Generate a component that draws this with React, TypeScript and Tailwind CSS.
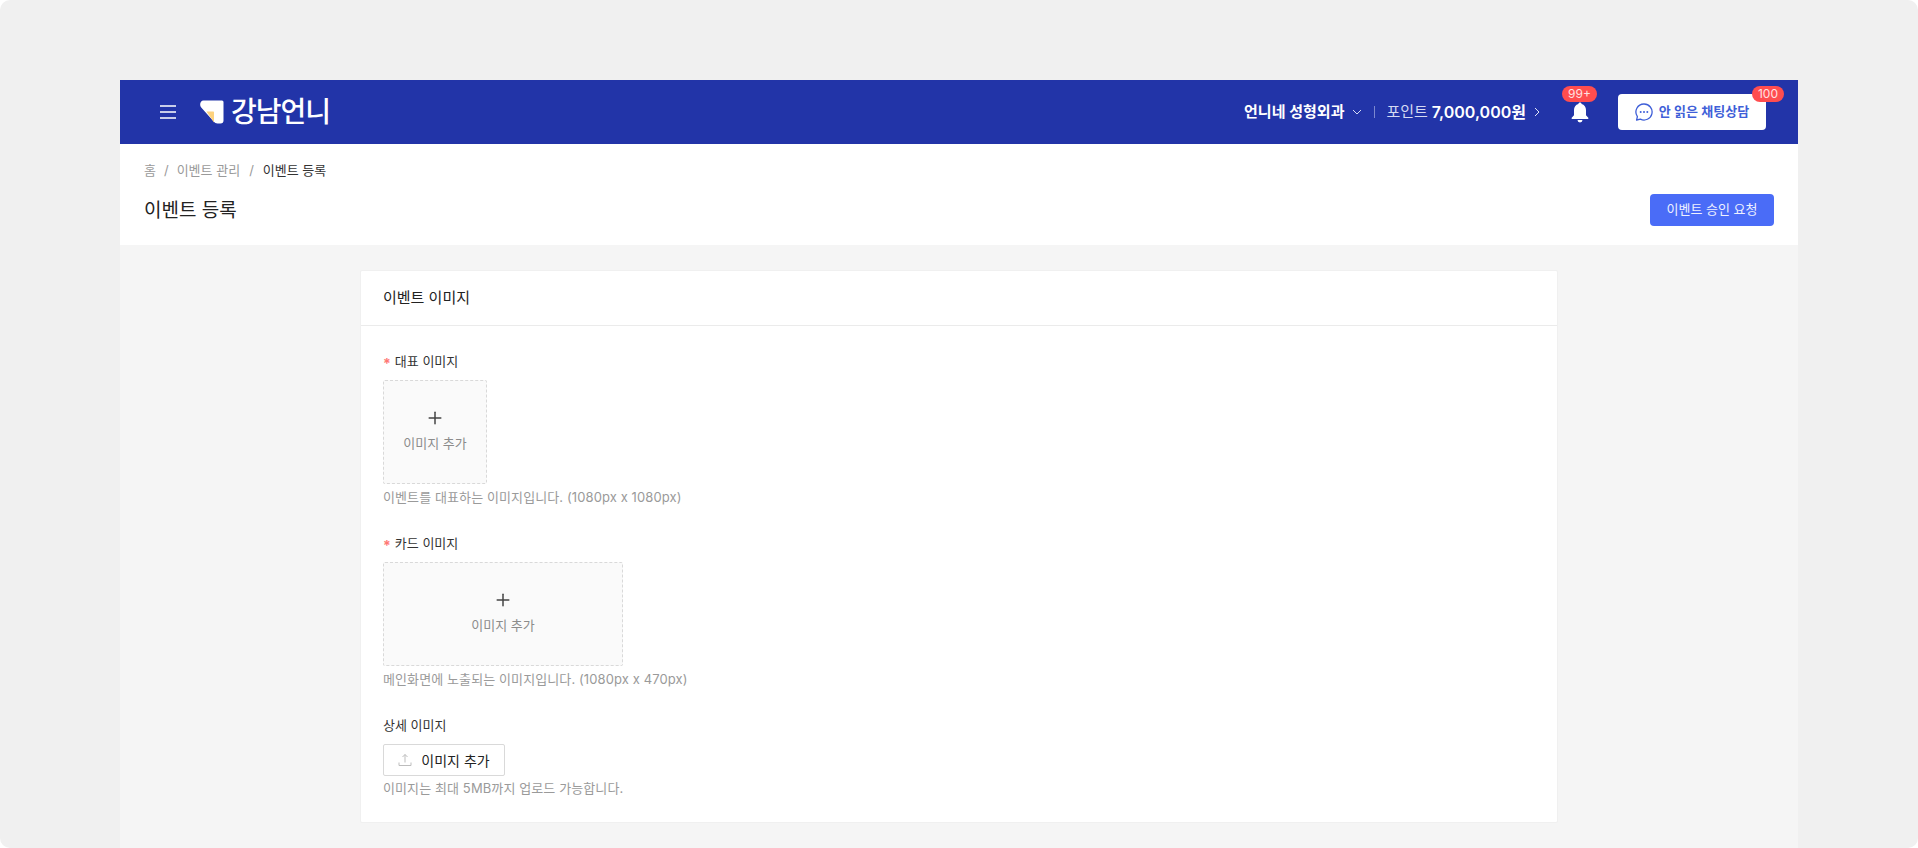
import React from 'react';
import { Plus } from 'lucide-react';

const FONT = "font-['Inter','Noto_Sans_CJK_KR',sans-serif]";

const MenuIcon = () => (
  <svg width="16" height="14" viewBox="0 0 16 14" fill="none" stroke="white" strokeWidth="1.4">
    <path d="M0 1h16M0 7h16M0 13h16" />
  </svg>
);

const LogoMark = () => (
  <svg width="24" height="24" viewBox="0 0 24 24">
    <path d="M3.5 0.5H22a1.5 1.5 0 0 1 1.5 1.5V20.5a3 3 0 0 1-3 3h-3c-1.6 0-2.8-.7-3.8-1.9L1 7.2C-.8 4.6 .4 .5 3.5 .5z" fill="white" />
    <path d="M6.5 11.5H13c.6 0 1 .4 1 1v10L6.5 11.5z" fill="#fdd27e" />
  </svg>
);

const BellIcon = () => (
  <svg width="18" height="21" viewBox="0 0 18 21" fill="white">
    <path d="M9 0.5c.9 0 1.5.6 1.6 1.4C13.4 2.6 15 5 15 8v5.2l2.3 2.6c.4.5.1 1.2-.5 1.2H1.2c-.6 0-.9-.7-.5-1.2L3 13.2V8c0-3 1.6-5.4 4.4-6.1C7.5 1.1 8.1.5 9 .5z" />
    <path d="M6.5 18h5a2.5 2.5 0 0 1-5 0z" />
  </svg>
);

const ChatIcon = () => (
  <svg width="18" height="18" viewBox="0 0 18 18" fill="none">
    <path d="M9 1a8 8 0 1 1-3.6 15.1L1.6 17l.8-3.4A8 8 0 0 1 9 1z" stroke="#3f5fd8" strokeWidth="1.3" strokeLinejoin="round" />
    <circle cx="5.7" cy="9" r="1" fill="#3f5fd8" />
    <circle cx="9" cy="9" r="1" fill="#3f5fd8" />
    <circle cx="12.3" cy="9" r="1" fill="#3f5fd8" />
  </svg>
);

const UploadIcon = () => (
  <svg width="14" height="14" viewBox="0 0 14 14" fill="none" stroke="#bdbdbd" strokeWidth="1">
    <path d="M7 9.5V1.5M4.5 4L7 1.5 9.5 4M1 9.5V12.5H13V9.5" />
  </svg>
);

const UploadBox = ({ width }: { width: string }) => (
  <div className={`${width} h-[104px] flex flex-col items-center justify-center rounded-[2px] border border-dashed border-[#d9d9d9] bg-[#fafafa] pb-1`}>
    <Plus size={20} strokeWidth={1.8} className="text-[#444]" />
    <span className="mt-[5px] text-[13px] leading-5 text-[#8c8c8c]">이미지 추가</span>
  </div>
);

const Label = ({ text, required }: { text: string; required?: boolean }) => (
  <div className="flex items-center h-5 mb-[9px] pt-[2px] text-[13px] text-[#333]">
    {required && <span className="mr-[4px] mt-[3px] text-[14px] font-bold text-[#ff7875]">*</span>}
    {text}
  </div>
);

const Hint = ({ text }: { text: string }) => (
  <p className="mt-[3px] text-[13px] leading-5 tracking-[0.1px] text-[#9a9a9a]">{text}</p>
);

export default function App() {
  return (
    <div className="bg-white">
      <div className={`${FONT} h-[848px] overflow-hidden rounded-[10px] bg-[#f0f0f0] px-[120px] pt-[80px]`}>
        <div className="h-full bg-[#f5f5f5]">
          <header className="relative flex h-16 items-center bg-[#2234a8] pl-[40px] pr-[32px] text-white">
            <MenuIcon />
            <div className="ml-[24px] flex items-center">
              <LogoMark />
              <span className="ml-[7px] text-[28px] font-medium leading-none tracking-[-1px]">강남언니</span>
            </div>
            <div className="ml-auto flex items-center">
              <span className="text-[15px] font-semibold">언니네 성형외과</span>
              <svg className="ml-2" width="10" height="6" viewBox="0 0 10 6" fill="none" stroke="#d5daf3" strokeWidth="1">
                <path d="M1 1l4 4 4-4" />
              </svg>
              <span className="ml-[12px] mr-[11px] h-3 w-px bg-[#7c88cf]" />
              <span className="text-[15px] text-[#d5daf3]">포인트</span>
              <span className="ml-[4px] text-[16px] font-semibold">7,000,000원</span>
              <svg className="ml-2" width="6" height="10" viewBox="0 0 6 10" fill="none" stroke="#e3e6f7" strokeWidth="1">
                <path d="M1 1l4 4-4 4" />
              </svg>
              <div className="relative ml-[31px] flex h-[21px] w-[18px] items-center">
                <BellIcon />
                <span className="absolute left-[-9px] top-[-16px] flex h-4 w-[35px] items-center justify-center rounded-full bg-[#ff4d4f] text-[12px] text-[#ffe1e1]">99+</span>
              </div>
              <div className="relative ml-[29px] flex h-9 w-[148px] items-center justify-center rounded-[4px] bg-white">
                <ChatIcon />
                <span className="ml-[6px] text-[13px] font-semibold text-[#3f5fd8]">안 읽은 채팅상담</span>
                <span className="absolute right-[-18px] top-[-8px] flex h-4 w-[32px] items-center justify-center rounded-full bg-[#ff4d4f] text-[12px] text-[#ffe1e1]">100</span>
              </div>
            </div>
          </header>

          <div className="h-[101px] bg-white px-6 pt-4">
            <nav className="flex h-[22px] items-center text-[13px] text-[#9a9a9a]">
              <span>홈</span>
              <span className="mx-[8px]">/</span>
              <span>이벤트 관리</span>
              <span className="mx-[9px]">/</span>
              <span className="text-[#333]">이벤트 등록</span>
            </nav>
            <div className="mt-3 flex h-8 items-center justify-between">
              <h1 className="pt-[2px] text-[19px] font-normal leading-[30px] text-[#222]">이벤트 등록</h1>
              <button className="h-8 w-[124px] rounded-[4px] bg-[#4a6cf7] text-[13px] text-[#eef1ff]">이벤트 승인 요청</button>
            </div>
          </div>

          <section className="mx-auto mt-[25px] h-[553px] w-[1198px] rounded-[2px] border border-[#f0f0f0] bg-white">
            <div className="flex h-[55px] items-center border-b border-[#ebebeb] px-[22px] text-[15px] text-[#222]">이벤트 이미지</div>
            <div className="px-[22px] pt-[25px]">
              <div>
                <Label text="대표 이미지" required />
                <UploadBox width="w-[104px]" />
                <Hint text="이벤트를 대표하는 이미지입니다. (1080px x 1080px)" />
              </div>
              <div className="mt-[26px]">
                <Label text="카드 이미지" required />
                <UploadBox width="w-[240px]" />
                <Hint text="메인화면에 노출되는 이미지입니다. (1080px x 470px)" />
              </div>
              <div className="mt-[26px]">
                <Label text="상세 이미지" />
                <button className="-mb-px flex h-8 w-[122px] items-center justify-center rounded-[2px] border border-[#d9d9d9] bg-white text-[14px] text-[#222]">
                  <UploadIcon />
                  <span className="ml-[9px]">이미지 추가</span>
                </button>
                <Hint text="이미지는 최대 5MB까지 업로드 가능합니다." />
              </div>
            </div>
          </section>
        </div>
      </div>
    </div>
  );
}
